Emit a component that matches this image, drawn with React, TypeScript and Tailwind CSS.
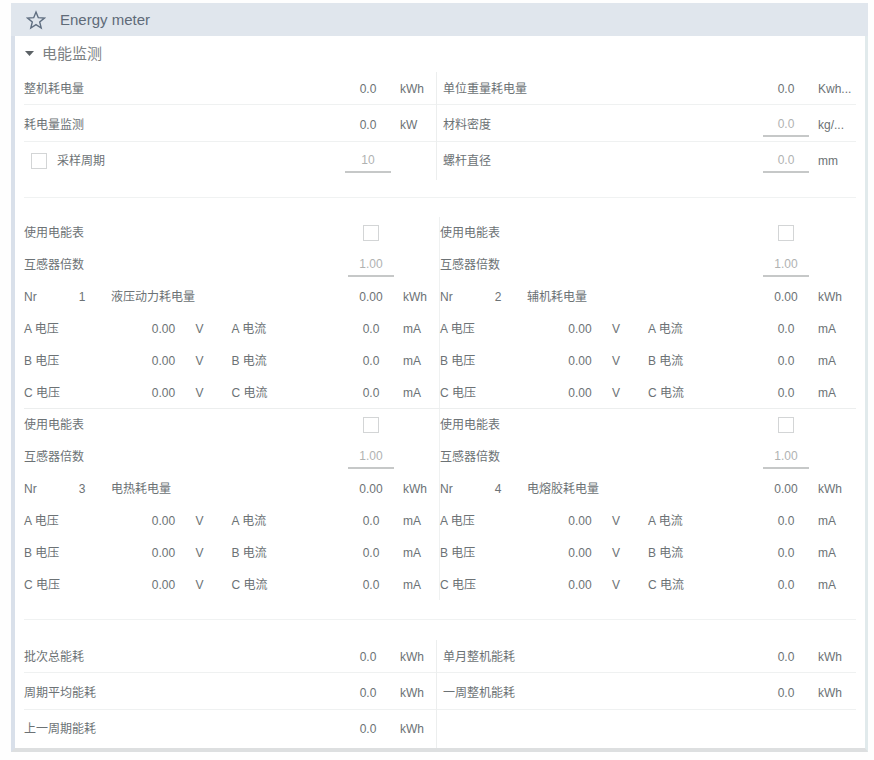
import type { ReactNode } from "react";

type Reading = {
  id: string;
  label: string;
  value: string;
  unit?: string;
  editable?: boolean;
  optional?: boolean;
};

const summary: Reading[][] = [
  [
    { id: "machine-energy", label: "整机耗电量", value: "0.0", unit: "kWh" },
    { id: "power-monitor", label: "耗电量监测", value: "0.0", unit: "kW" },
    { id: "sample-period", label: "采样周期", value: "10", editable: true, optional: true },
  ],
  [
    { id: "unit-weight", label: "单位重量耗电量", value: "0.0", unit: "Kwh..." },
    { id: "density", label: "材料密度", value: "0.0", unit: "kg/...", editable: true },
    { id: "screw", label: "螺杆直径", value: "0.0", unit: "mm", editable: true },
  ],
];

const totals: Reading[][] = [
  [
    { id: "batch", label: "批次总能耗", value: "0.0", unit: "kWh" },
    { id: "cycle-average", label: "周期平均能耗", value: "0.0", unit: "kWh" },
    { id: "last-cycle", label: "上一周期能耗", value: "0.0", unit: "kWh" },
  ],
  [
    { id: "month", label: "单月整机能耗", value: "0.0", unit: "kWh" },
    { id: "week", label: "一周整机能耗", value: "0.0", unit: "kWh" },
  ],
];

const meters = [
  { nr: 1, name: "液压动力耗电量" },
  { nr: 2, name: "辅机耗电量" },
  { nr: 3, name: "电热耗电量" },
  { nr: 4, name: "电熔胶耗电量" },
];

const rowHeights = ["h-[33px] border-b pt-px", "h-[37px] border-b pt-[3px]", "h-[38px]"];

function Value({ children }: { children: ReactNode }) {
  return <span className="flex w-16 shrink-0 justify-center">{children}</span>;
}

function Unit({ children, last }: { children?: ReactNode; last?: boolean }) {
  return (
    <span className={`shrink-0 whitespace-nowrap ${last ? "w-[38px]" : "w-9"}`}>{children}</span>
  );
}

function NumberField({ id, value, label }: { id: string; value: string; label?: string }) {
  return (
    <input
      id={id}
      type="text"
      aria-label={label}
      defaultValue={value}
      className="h-6 w-[46px] border-b-2 border-[#c6c8c8] bg-transparent text-center text-[#b0b2b2] outline-none"
    />
  );
}

function Checkbox({ id }: { id: string }) {
  return (
    <input
      id={id}
      type="checkbox"
      className="size-4 shrink-0 appearance-none border border-[#d3d5d6] bg-white checked:bg-[#8a949e]"
    />
  );
}

function ReadingRow({ reading, height, last }: { reading: Reading; height: string; last: boolean }) {
  const { id, label, value, unit, editable, optional } = reading;
  return (
    <div className={`flex items-center border-[#eff1f1] ${height}`}>
      {optional ? (
        <div className="flex flex-1 items-center gap-[10px] pl-[7px]">
          <Checkbox id={id} />
          <label htmlFor={id}>{label}</label>
        </div>
      ) : editable ? (
        <label htmlFor={id} className="flex-1">
          {label}
        </label>
      ) : (
        <span className="flex-1">{label}</span>
      )}
      <Value>
        {editable ? (
          <NumberField
            id={optional ? `${id}-value` : id}
            value={value}
            label={optional ? label : undefined}
          />
        ) : (
          value
        )}
      </Value>
      <Unit last={last}>{unit}</Unit>
    </div>
  );
}

function ReadingGrid({ columns }: { columns: Reading[][] }) {
  return (
    <div className="grid grid-cols-[103fr_105fr]">
      {columns.map((rows, column) => (
        <div key={column} className={column === 1 ? "border-l border-[#eceeee]" : ""}>
          {rowHeights.map((height, i) =>
            rows[i] ? (
              <div key={i} className={column === 1 ? "[&>div]:pl-[6px]" : ""}>
                <ReadingRow reading={rows[i]} height={height} last={column === 1} />
              </div>
            ) : null,
          )}
        </div>
      ))}
    </div>
  );
}

function MeterBlock({ nr, name }: { nr: number; name: string }) {
  const last = nr % 2 === 0;
  return (
    <div
      className={`border-[#eff1f1] [&>div]:flex [&>div]:h-8 [&>div]:items-center [&>div:last-child]:h-[31px] ${last ? "" : "border-r"}`}
    >
      <div>
        <label htmlFor={`use-${nr}`} className="flex-1">
          使用电能表
        </label>
        <Value>
          <Checkbox id={`use-${nr}`} />
        </Value>
        <Unit last={last} />
      </div>
      <div>
        <label htmlFor={`ratio-${nr}`} className="flex-1">
          互感器倍数
        </label>
        <Value>
          <NumberField id={`ratio-${nr}`} value="1.00" />
        </Value>
        <Unit last={last} />
      </div>
      <div>
        <span className="w-10">Nr</span>
        <span className="w-9 text-center">{nr}</span>
        <span className="flex-1 pl-[11px]">{name}</span>
        <Value>0.00</Value>
        <Unit last={last}>kWh</Unit>
      </div>
      {["A", "B", "C"].map((phase) => (
        <div key={phase}>
          <div className="flex w-1/2 items-center">
            <span className="flex-1">{phase} 电压</span>
            <Value>0.00</Value>
            <Unit>V</Unit>
          </div>
          <div className="flex w-1/2 items-center">
            <span className="flex-1">{phase} 电流</span>
            <Value>0.0</Value>
            <Unit last={last}>mA</Unit>
          </div>
        </div>
      ))}
    </div>
  );
}

export default function App() {
  return (
    <div className="min-h-screen bg-[#fefefe] pt-[3px] pr-[6px] pb-2 pl-[11px] font-['Liberation_Sans','Noto_Sans_CJK_SC',sans-serif] text-xs text-[#6c7275]">
      <header className="flex h-[33px] items-center gap-[14px] bg-[#e0e6ed] pl-[15px]">
        <button type="button" aria-label="Favorite" className="text-[#5f6e80]">
          <svg viewBox="0 0 20 20" className="size-5" fill="none" stroke="currentColor" strokeWidth="1.4">
            <path d="M10 2 12.3 7.7 18.4 8.1 13.7 12 15.2 18 10 14.7 4.8 18 6.3 12 1.6 8.1 7.7 7.7Z" />
          </svg>
        </button>
        <h1 className="text-[15px] text-[#5f6b79]">Energy meter</h1>
      </header>

      <main className="border-r-[3px] border-b-4 border-l-4 border-t-0 border-r-[#e1eaec] border-b-[#dddfe0] border-l-[#d9e0ea] bg-white px-[9px]">
        <h2 className="flex h-9 items-center">
          <button
            type="button"
            aria-expanded="true"
            className="flex items-center gap-2 pl-[1px] text-[15px] text-[#7c8183]"
          >
            <svg viewBox="0 0 9 5" className="h-[5px] w-[9px]" fill="#5c6266">
              <path d="M0 0h9L4.5 5Z" />
            </svg>
            电能监测
          </button>
        </h2>

        <ReadingGrid columns={summary} />

        <hr className="mt-[17px] mb-[19px] border-[#f0f2f2]" />

        <div className="grid grid-cols-2">
          {meters.slice(0, 2).map((meter) => (
            <MeterBlock key={meter.nr} {...meter} />
          ))}
        </div>
        <div className="grid grid-cols-2 border-t border-[#eceeee]">
          {meters.slice(2).map((meter) => (
            <MeterBlock key={meter.nr} {...meter} />
          ))}
        </div>

        <hr className="mt-[19px] mb-5 border-[#f0f2f2]" />

        <ReadingGrid columns={totals} />
      </main>
    </div>
  );
}
